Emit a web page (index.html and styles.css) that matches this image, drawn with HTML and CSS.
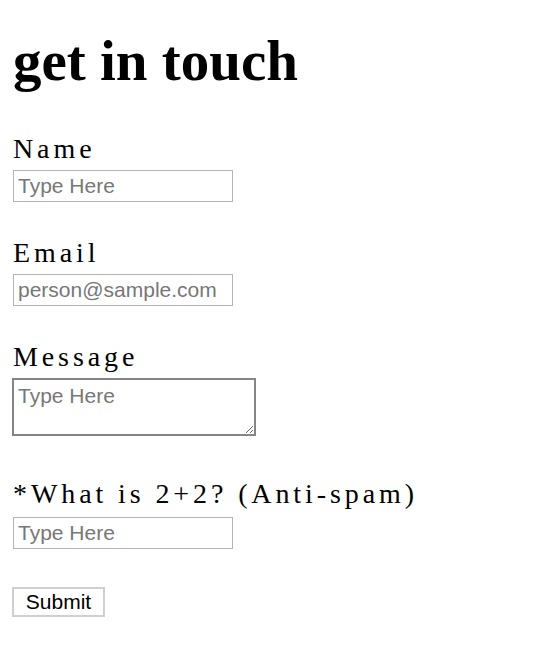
FILE: index.html
```html
<!DOCTYPE html>
<html>
<head>
<meta charset="utf-8">
<link rel="stylesheet" href="styles.css">
<title>get in touch</title>
</head>
<body>
<h1 class="title">get in touch</h1>
<form class="contact">
  <div class="field">
    <label class="label" for="name">Name</label>
    <input class="text-input" id="name" type="text" placeholder="Type Here">
  </div>
  <div class="field">
    <label class="label" for="email">Email</label>
    <input class="text-input" id="email" type="email" placeholder="person@sample.com">
  </div>
  <div class="field field-message">
    <label class="label" for="message">Message</label>
    <textarea class="message-input" id="message" placeholder="Type Here"></textarea>
  </div>
  <div class="field field-spam">
    <label class="label label-spam" for="spam">*What is 2+2? (Anti-spam)</label>
    <input class="text-input" id="spam" type="text" placeholder="Type Here">
  </div>
  <button class="submit" type="submit">Submit</button>
</form>
</body>
</html>
```
FILE: styles.css
```css
html, body {
  margin: 0;
  padding: 0;
  background: #ffffff;
}

body {
  padding: 0 12px;
  font-family: "Liberation Serif", "Times New Roman", serif;
  color: #000000;
}

.title {
  margin: 30px 0 42px 1px;
  font-size: 57px;
  line-height: 62px;
  font-weight: bold;
}

.contact {
  display: flex;
  flex-direction: column;
  align-items: flex-start;
}

.field {
  display: flex;
  flex-direction: column;
  align-items: flex-start;
  margin-bottom: 36px;
}

.field-message {
  margin-bottom: 43px;
}

.field-spam {
  margin-bottom: 38px;
}

.label {
  display: block;
  margin-left: 1px;
  margin-bottom: 6px;
  font-size: 28px;
  line-height: 30px;
  letter-spacing: 3.9px;
}

.label-spam {
  margin-bottom: 8px;
}

.text-input {
  box-sizing: border-box;
  width: 220px;
  height: 32px;
  margin: 0 0 0 1px;
  padding: 0 4px;
  border: 1px solid #b4b4b4;
  border-radius: 0;
  font-family: "Liberation Sans", Arial, sans-serif;
  font-size: 21px;
  color: #000000;
  background: #ffffff;
  outline: none;
}

.message-input {
  box-sizing: border-box;
  width: 244px;
  height: 58px;
  margin: 0;
  padding: 5px 4px 2px;
  border: 2px solid #858585;
  border-radius: 0;
  font-family: "Liberation Sans", Arial, sans-serif;
  font-size: 21px;
  line-height: 22px;
  color: #000000;
  background: #ffffff;
  outline: none;
}

.text-input::placeholder,
.message-input::placeholder {
  color: #777777;
  opacity: 1;
}

.submit {
  box-sizing: border-box;
  width: 93px;
  height: 30px;
  margin: 0;
  padding: 0;
  border: 2px solid #cfcfcf;
  border-radius: 0;
  background: #ffffff;
  font-family: "Liberation Sans", Arial, sans-serif;
  font-size: 21px;
  color: #000000;
}
```
